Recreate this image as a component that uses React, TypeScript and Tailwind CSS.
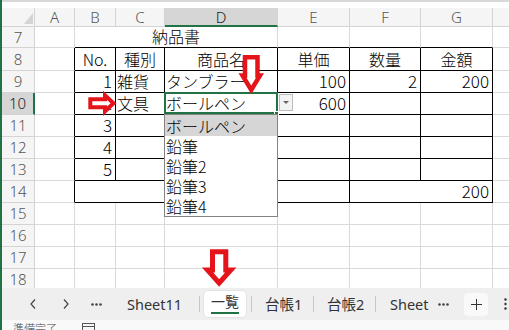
import React from "react";

type Cell = { t?: string; al?: "l" | "r" | "c"; span?: number; w?: string };

const COLW = ["w-[40px]", "w-[41px]", "w-[49px]", "w-[113px]", "w-[72px]", "w-[71px]", "w-[72px]", "w-[72px]"];
const LETTERS = ["A", "B", "C", "D", "E", "F", "G", "H"];
const ROWS = [7, 8, 9, 10, 11, 12, 13, 14, 15, 16, 17, 18];

// 納品書 sheet, rows 7-18, columns A..H (0..7)
const sheet: Record<number, Record<number, Cell>> = {
  7: { 1: { t: "納品書", al: "c", span: 3, w: "w-[203px]" } },
  8: {
    1: { t: "No.", al: "c" },
    2: { t: "種別", al: "c" },
    3: { t: "商品名", al: "c" },
    4: { t: "単価", al: "c" },
    5: { t: "数量", al: "c" },
    6: { t: "金額", al: "c" },
  },
  9: {
    1: { t: "1", al: "r" },
    2: { t: "雑貨" },
    3: { t: "タンブラー" },
    4: { t: "100", al: "r" },
    5: { t: "2", al: "r" },
    6: { t: "200", al: "r" },
  },
  10: { 1: { t: "2", al: "r" }, 2: { t: "文具" }, 3: { t: "ボールペン" }, 4: { t: "600", al: "r" } },
  11: { 1: { t: "3", al: "r" } },
  12: { 1: { t: "4", al: "r" } },
  13: { 1: { t: "5", al: "r" } },
  14: { 1: { span: 3, w: "w-[203px]" }, 5: { t: "200", al: "r", span: 2, w: "w-[143px]" } },
};

const items = ["ボールペン", "鉛筆", "鉛筆2", "鉛筆3", "鉛筆4"];

function rowHeight(n: number) {
  if (n === 7) return "h-[21px]";
  if (n === 8) return "h-[23px]";
  return "h-[22px]";
}

function GridRow({ n }: { n: number }) {
  const data = sheet[n] ?? {};
  const cells: React.ReactNode[] = [];
  for (let c = 0; c < 8; ) {
    const d = data[c] ?? {};
    const span = d.span ?? 1;
    const end = c + span - 1;
    const rBlack = n >= 8 && n <= 14 && end <= 6;
    const bBlack = n >= 7 && n <= 14 && c >= 1 && end <= 6;
    const num = d.t !== undefined && /^\d+$/.test(d.t);
    cells.push(
      <div
        key={c}
        className={`${d.w ?? COLW[c]} shrink-0 h-full flex items-end pb-[3px] border-r border-b ${
          rBlack ? "border-r-black" : "border-r-[#dadada]"
        } ${bBlack ? "border-b-black" : "border-b-[#dadada]"} ${
          d.al === "r" ? "justify-end pr-[3px]" : d.al === "c" ? "justify-center" : "justify-start pl-[1px]"
        }`}
      >
        {d.t && (
          <span
            className={
              num
                ? "font-['Liberation_Sans_Narrow','Noto_Sans_CJK_JP',sans-serif] text-[17px] leading-none"
                : "text-[16px] leading-none"
            }
          >
            {d.t}
          </span>
        )}
      </div>
    );
    c += span;
  }

  return (
    <div className={`flex shrink-0 ${rowHeight(n)}`}>
      <div
        className={`w-[33px] shrink-0 h-full flex items-center justify-center border-b border-b-[#d4d4d4] font-['Noto_Sans',sans-serif] text-[15px] leading-none ${
          n === 10
            ? "bg-[#d6d6d6] border-r-2 border-r-[#217346] text-[#222]"
            : "bg-[#f5f5f5] border-r border-r-[#d4d4d4] text-[#555]"
        }`}
      >
        {n}
      </div>
      {cells}
    </div>
  );
}

function Dots({ className = "" }: { className?: string }) {
  return (
    <svg className={className} width="11" height="3" viewBox="0 0 11 3">
      <circle cx="1.5" cy="1.5" r="1.3" fill="#444" />
      <circle cx="5.5" cy="1.5" r="1.3" fill="#444" />
      <circle cx="9.5" cy="1.5" r="1.3" fill="#444" />
    </svg>
  );
}

export default function App() {
  return (
    <div className="relative w-[509px] h-[330px] overflow-hidden bg-white flex font-['Noto_Sans_CJK_JP',sans-serif] font-light text-black">
      {/* window edge */}
      <div className="w-[2px] h-full shrink-0 bg-[#217346]" />

      <div className="w-[507px] shrink-0 flex flex-col">
        {/* formula bar bottom */}
        <div className="h-[8px] shrink-0 bg-white border-t-2 border-t-[#d8d8d8]" />

        {/* grid */}
        <div className="h-[280px] shrink-0 overflow-hidden flex flex-col">
          <div className="flex h-[19px] shrink-0 font-['Noto_Sans',sans-serif] text-[15px] leading-[16px] text-[#555]">
            <div className="w-[33px] shrink-0 h-full flex items-end justify-end pr-[1px] pb-[2px] bg-[#f5f5f5] border-r border-b border-[#d4d4d4]">
              <svg width="9" height="11" viewBox="0 0 9 11">
                <polygon points="9,0 9,11 0,11" fill="#d4d4d4" />
              </svg>
            </div>
            {LETTERS.map((l, i) => (
              <div
                key={l}
                className={`${COLW[i]} shrink-0 h-full flex items-center justify-center border-r border-r-[#d4d4d4] ${
                  l === "D"
                    ? "bg-[#d6d6d6] border-b-2 border-b-[#217346] text-[#222]"
                    : "bg-[#f5f5f5] border-b border-b-[#d4d4d4]"
                }`}
              >
                {l}
              </div>
            ))}
          </div>
          {ROWS.map((n) => (
            <GridRow key={n} n={n} />
          ))}
        </div>

        {/* sheet tabs */}
        <div className="h-[32px] shrink-0 bg-[#efefef] flex items-center text-[#333] text-[14.5px] leading-none font-normal font-['Noto_Sans','Noto_Sans_CJK_JP',sans-serif]">
          <svg className="ml-[28px]" width="6" height="10" viewBox="0 0 6 10">
            <polyline points="5,0.5 1,5 5,9.5" fill="none" stroke="#444" strokeWidth="1.2" />
          </svg>
          <svg className="ml-[27px]" width="6" height="10" viewBox="0 0 6 10">
            <polyline points="1,0.5 5,5 1,9.5" fill="none" stroke="#444" strokeWidth="1.2" />
          </svg>
          <Dots className="ml-[22px]" />
          <span className="ml-[25px] w-[56px] whitespace-nowrap">Sheet11</span>
          <div className="ml-[16px] w-px h-[16px] bg-[#c6c6c6]" />
          <div className="ml-[3px] w-[44px] h-[28px] rounded-[5px] bg-white border border-[#e2e2e2] flex flex-col items-center justify-end pb-[3px]">
            <span className="text-[14px] leading-none">一覧</span>
            <div className="mt-[3px] w-[28px] h-[2px] bg-[#217346]" />
          </div>
          <div className="ml-[4px] w-px h-[16px] bg-[#c6c6c6]" />
          <span className="ml-[13px] w-[37px] whitespace-nowrap">台帳1</span>
          <div className="ml-[11px] w-px h-[16px] bg-[#c6c6c6]" />
          <span className="ml-[13px] w-[36px] whitespace-nowrap">台帳2</span>
          <div className="ml-[12px] w-px h-[16px] bg-[#c6c6c6]" />
          <span className="ml-[14px] w-[38px] whitespace-nowrap">Sheet</span>
          <Dots className="ml-[10px]" />
          <div className="ml-[15px] w-[24px] h-[23px] rounded-[4px] bg-[#f9f9f9] flex items-center justify-center">
            <svg width="11" height="11" viewBox="0 0 11 11">
              <path d="M5.5 0v11M0 5.5h11" stroke="#333" strokeWidth="1" />
            </svg>
          </div>
          <svg className="ml-[16px]" width="3" height="12" viewBox="0 0 3 12">
            <circle cx="1.5" cy="1.5" r="1.2" fill="#333" />
            <circle cx="1.5" cy="6" r="1.2" fill="#333" />
            <circle cx="1.5" cy="10.5" r="1.2" fill="#333" />
          </svg>
        </div>

        {/* status bar */}
        <div className="h-[10px] shrink-0 overflow-hidden bg-[#f9f9f9] flex items-start pt-[3px] text-[#444]">
          <span className="ml-[11px] text-[11px] leading-none">準備完了</span>
          <svg className="ml-[25px]" width="13" height="10" viewBox="0 0 13 10">
            <rect x="0.5" y="0.5" width="12" height="12" fill="none" stroke="#555" />
            <path d="M0.5 3.5h12" stroke="#555" />
          </svg>
        </div>
      </div>

      {/* selected cell D10 */}
      <div className="absolute left-[164px] top-[92px] w-[114px] h-[22px] border-2 border-[#217346]" />
      <div className="absolute left-[274px] top-[111px] w-[5px] h-[5px] bg-[#217346] border border-white" />

      {/* validation dropdown button */}
      <div className="absolute left-[279px] top-[94px] w-[14px] h-[17px] bg-[#f3f3f3] border border-[#bdbdbd] flex items-center justify-center">
        <svg width="6" height="3" viewBox="0 0 6 3">
          <polygon points="0,0 6,0 3,3" fill="#666" />
        </svg>
      </div>

      {/* validation list */}
      <div className="absolute left-[164px] top-[114px] w-[114px] h-[103px] bg-white border border-[#848484] flex flex-col">
        {items.map((it, i) => (
          <div
            key={it}
            className={`${i === 0 ? "h-[21px] bg-[#d6d6d6]" : "h-[20px]"} flex items-center pl-[1px] text-[16px] leading-[18px]`}
          >
            {it}
          </div>
        ))}
      </div>

      {/* red arrows */}
      <svg className="absolute left-[237px] top-[52px]" width="28" height="44" viewBox="0 0 28 44">
        <polygon
          points="8,5.25 20.5,5.25 20.5,23.5 23,23.5 14.25,38 5.5,23.5 8,23.5"
          fill="white"
          stroke="#e5141b"
          strokeWidth="4.5"
          strokeMiterlimit="10"
        />
      </svg>
      <svg className="absolute left-[86px] top-[91px]" width="34" height="25" viewBox="0 0 34 25">
        <polygon
          points="4.3,8.3 19,8.3 19,4.3 27.5,12.3 19,20.3 19,16.3 4.3,16.3"
          fill="white"
          stroke="#e5141b"
          strokeWidth="4"
          strokeMiterlimit="10"
        />
      </svg>
      <svg className="absolute left-[200px] top-[245px]" width="40" height="45" viewBox="0 0 40 45">
        <polygon
          points="12.5,6.8 25.8,6.8 25.8,25 30.8,25 19.15,38 7.5,25 12.5,25"
          fill="white"
          stroke="#e5141b"
          strokeWidth="5"
          strokeMiterlimit="10"
        />
      </svg>
    </div>
  );
}
